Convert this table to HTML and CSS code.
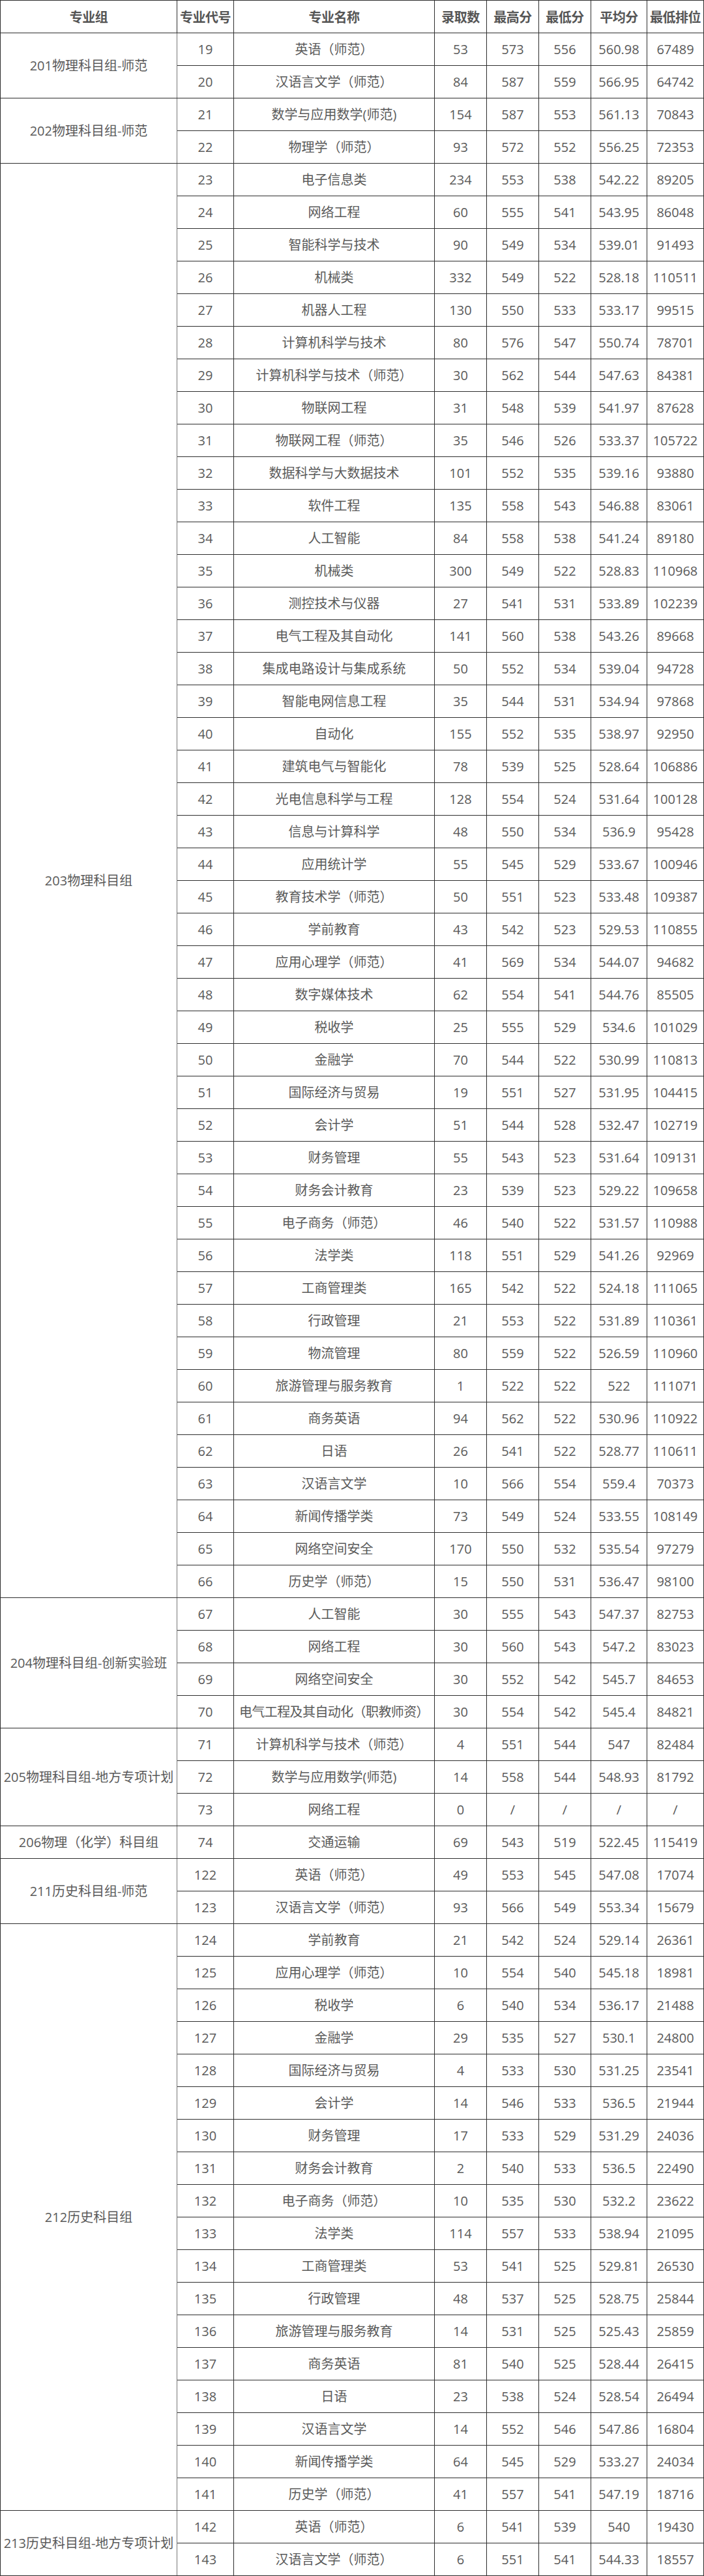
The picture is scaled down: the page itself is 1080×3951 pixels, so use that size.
FILE: index.html
```html
<!DOCTYPE html>
<html lang="zh-CN">
<head>
<meta charset="utf-8">
<title>录取分数</title>
<link rel="stylesheet" href="styles.css">
</head>
<body>
<table class="score-table">
<colgroup>
<col class="c-group"><col class="c-code"><col class="c-name"><col class="c-num"><col class="c-num"><col class="c-num"><col class="c-avg"><col class="c-rank">
</colgroup>
<thead>
<tr><th>专业组</th><th>专业代号</th><th>专业名称</th><th>录取数</th><th>最高分</th><th>最低分</th><th class="gv">平均分</th><th class="gv">最低排位</th></tr>
</thead>
<tbody>
<tr><td rowspan="2" class="grp">201物理科目组-师范</td><td>19</td><td>英语（师范）</td><td>53</td><td>573</td><td>556</td><td class="gv">560.98</td><td class="gv">67489</td></tr>
<tr><td>20</td><td>汉语言文学（师范）</td><td>84</td><td>587</td><td>559</td><td class="gv">566.95</td><td class="gv">64742</td></tr>

<tr><td rowspan="2" class="grp">202物理科目组-师范</td><td>21</td><td>数学与应用数学(师范)</td><td>154</td><td>587</td><td>553</td><td class="gv">561.13</td><td class="gv">70843</td></tr>
<tr><td>22</td><td>物理学（师范）</td><td>93</td><td>572</td><td>552</td><td class="gv">556.25</td><td class="gv">72353</td></tr>

<tr><td rowspan="44" class="grp">203物理科目组</td><td>23</td><td>电子信息类</td><td>234</td><td>553</td><td>538</td><td class="gv">542.22</td><td class="gv">89205</td></tr>
<tr><td>24</td><td>网络工程</td><td>60</td><td>555</td><td>541</td><td class="gv">543.95</td><td class="gv">86048</td></tr>
<tr><td>25</td><td>智能科学与技术</td><td>90</td><td>549</td><td>534</td><td class="gv">539.01</td><td class="gv">91493</td></tr>
<tr><td>26</td><td>机械类</td><td>332</td><td>549</td><td>522</td><td class="gv">528.18</td><td class="gv">110511</td></tr>
<tr><td>27</td><td>机器人工程</td><td>130</td><td>550</td><td>533</td><td class="gv">533.17</td><td class="gv">99515</td></tr>
<tr><td>28</td><td>计算机科学与技术</td><td>80</td><td>576</td><td>547</td><td class="gv">550.74</td><td class="gv">78701</td></tr>
<tr><td>29</td><td>计算机科学与技术（师范）</td><td>30</td><td>562</td><td>544</td><td class="gv">547.63</td><td class="gv">84381</td></tr>
<tr><td>30</td><td>物联网工程</td><td>31</td><td>548</td><td>539</td><td class="gv">541.97</td><td class="gv">87628</td></tr>
<tr><td>31</td><td>物联网工程（师范）</td><td>35</td><td>546</td><td>526</td><td class="gv">533.37</td><td class="gv">105722</td></tr>
<tr><td>32</td><td>数据科学与大数据技术</td><td>101</td><td>552</td><td>535</td><td class="gv">539.16</td><td class="gv">93880</td></tr>
<tr><td>33</td><td>软件工程</td><td>135</td><td>558</td><td>543</td><td class="gv">546.88</td><td class="gv">83061</td></tr>
<tr><td>34</td><td>人工智能</td><td>84</td><td>558</td><td>538</td><td class="gv">541.24</td><td class="gv">89180</td></tr>
<tr><td>35</td><td>机械类</td><td>300</td><td>549</td><td>522</td><td class="gv">528.83</td><td class="gv">110968</td></tr>
<tr><td>36</td><td>测控技术与仪器</td><td>27</td><td>541</td><td>531</td><td class="gv">533.89</td><td class="gv">102239</td></tr>
<tr><td>37</td><td>电气工程及其自动化</td><td>141</td><td>560</td><td>538</td><td class="gv">543.26</td><td class="gv">89668</td></tr>
<tr><td>38</td><td>集成电路设计与集成系统</td><td>50</td><td>552</td><td>534</td><td class="gv">539.04</td><td class="gv">94728</td></tr>
<tr><td>39</td><td>智能电网信息工程</td><td>35</td><td>544</td><td>531</td><td class="gv">534.94</td><td class="gv">97868</td></tr>
<tr><td>40</td><td>自动化</td><td>155</td><td>552</td><td>535</td><td class="gv">538.97</td><td class="gv">92950</td></tr>
<tr><td>41</td><td>建筑电气与智能化</td><td>78</td><td>539</td><td>525</td><td class="gv">528.64</td><td class="gv">106886</td></tr>
<tr><td>42</td><td>光电信息科学与工程</td><td>128</td><td>554</td><td>524</td><td class="gv">531.64</td><td class="gv">100128</td></tr>
<tr><td>43</td><td>信息与计算科学</td><td>48</td><td>550</td><td>534</td><td class="gv">536.9</td><td class="gv">95428</td></tr>
<tr><td>44</td><td>应用统计学</td><td>55</td><td>545</td><td>529</td><td class="gv">533.67</td><td class="gv">100946</td></tr>
<tr><td>45</td><td>教育技术学（师范）</td><td>50</td><td>551</td><td>523</td><td class="gv">533.48</td><td class="gv">109387</td></tr>
<tr><td>46</td><td>学前教育</td><td>43</td><td>542</td><td>523</td><td class="gv">529.53</td><td class="gv">110855</td></tr>
<tr><td>47</td><td>应用心理学（师范）</td><td>41</td><td>569</td><td>534</td><td class="gv">544.07</td><td class="gv">94682</td></tr>
<tr><td>48</td><td>数字媒体技术</td><td>62</td><td>554</td><td>541</td><td class="gv">544.76</td><td class="gv">85505</td></tr>
<tr><td>49</td><td>税收学</td><td>25</td><td>555</td><td>529</td><td class="gv">534.6</td><td class="gv">101029</td></tr>
<tr><td>50</td><td>金融学</td><td>70</td><td>544</td><td>522</td><td class="gv">530.99</td><td class="gv">110813</td></tr>
<tr><td>51</td><td>国际经济与贸易</td><td>19</td><td>551</td><td>527</td><td class="gv">531.95</td><td class="gv">104415</td></tr>
<tr><td>52</td><td>会计学</td><td>51</td><td>544</td><td>528</td><td class="gv">532.47</td><td class="gv">102719</td></tr>
<tr><td>53</td><td>财务管理</td><td>55</td><td>543</td><td>523</td><td class="gv">531.64</td><td class="gv">109131</td></tr>
<tr><td>54</td><td>财务会计教育</td><td>23</td><td>539</td><td>523</td><td class="gv">529.22</td><td class="gv">109658</td></tr>
<tr><td>55</td><td>电子商务（师范）</td><td>46</td><td>540</td><td>522</td><td class="gv">531.57</td><td class="gv">110988</td></tr>
<tr><td>56</td><td>法学类</td><td>118</td><td>551</td><td>529</td><td class="gv">541.26</td><td class="gv">92969</td></tr>
<tr><td>57</td><td>工商管理类</td><td>165</td><td>542</td><td>522</td><td class="gv">524.18</td><td class="gv">111065</td></tr>
<tr><td>58</td><td>行政管理</td><td>21</td><td>553</td><td>522</td><td class="gv">531.89</td><td class="gv">110361</td></tr>
<tr><td>59</td><td>物流管理</td><td>80</td><td>559</td><td>522</td><td class="gv">526.59</td><td class="gv">110960</td></tr>
<tr><td>60</td><td>旅游管理与服务教育</td><td>1</td><td>522</td><td>522</td><td class="gv">522</td><td class="gv">111071</td></tr>
<tr><td>61</td><td>商务英语</td><td>94</td><td>562</td><td>522</td><td class="gv">530.96</td><td class="gv">110922</td></tr>
<tr><td>62</td><td>日语</td><td>26</td><td>541</td><td>522</td><td class="gv">528.77</td><td class="gv">110611</td></tr>
<tr><td>63</td><td>汉语言文学</td><td>10</td><td>566</td><td>554</td><td class="gv">559.4</td><td class="gv">70373</td></tr>
<tr><td>64</td><td>新闻传播学类</td><td>73</td><td>549</td><td>524</td><td class="gv">533.55</td><td class="gv">108149</td></tr>
<tr><td>65</td><td>网络空间安全</td><td>170</td><td>550</td><td>532</td><td class="gv">535.54</td><td class="gv">97279</td></tr>
<tr><td>66</td><td>历史学（师范）</td><td>15</td><td>550</td><td>531</td><td class="gv">536.47</td><td class="gv">98100</td></tr>

<tr><td rowspan="4" class="grp">204物理科目组-创新实验班</td><td>67</td><td>人工智能</td><td>30</td><td>555</td><td>543</td><td class="gv">547.37</td><td class="gv">82753</td></tr>
<tr><td>68</td><td>网络工程</td><td>30</td><td>560</td><td>543</td><td class="gv">547.2</td><td class="gv">83023</td></tr>
<tr><td>69</td><td>网络空间安全</td><td>30</td><td>552</td><td>542</td><td class="gv">545.7</td><td class="gv">84653</td></tr>
<tr><td>70</td><td class="tight">电气工程及其自动化（职教师资）</td><td>30</td><td>554</td><td>542</td><td class="gv">545.4</td><td class="gv">84821</td></tr>

<tr><td rowspan="3" class="grp">205物理科目组-地方专项计划</td><td>71</td><td>计算机科学与技术（师范）</td><td>4</td><td>551</td><td>544</td><td class="gv">547</td><td class="gv">82484</td></tr>
<tr><td>72</td><td>数学与应用数学(师范)</td><td>14</td><td>558</td><td>544</td><td class="gv">548.93</td><td class="gv">81792</td></tr>
<tr><td>73</td><td>网络工程</td><td>0</td><td>/</td><td>/</td><td class="gv">/</td><td class="gv">/</td></tr>

<tr><td class="grp">206物理（化学）科目组</td><td>74</td><td>交通运输</td><td>69</td><td>543</td><td>519</td><td class="gv">522.45</td><td class="gv">115419</td></tr>

<tr><td rowspan="2" class="grp">211历史科目组-师范</td><td>122</td><td>英语（师范）</td><td>49</td><td>553</td><td>545</td><td class="gv">547.08</td><td class="gv">17074</td></tr>
<tr><td>123</td><td>汉语言文学（师范）</td><td>93</td><td>566</td><td>549</td><td class="gv">553.34</td><td class="gv">15679</td></tr>

<tr><td rowspan="18" class="grp">212历史科目组</td><td>124</td><td>学前教育</td><td>21</td><td>542</td><td>524</td><td class="gv">529.14</td><td class="gv">26361</td></tr>
<tr><td>125</td><td>应用心理学（师范）</td><td>10</td><td>554</td><td>540</td><td class="gv">545.18</td><td class="gv">18981</td></tr>
<tr><td>126</td><td>税收学</td><td>6</td><td>540</td><td>534</td><td class="gv">536.17</td><td class="gv">21488</td></tr>
<tr><td>127</td><td>金融学</td><td>29</td><td>535</td><td>527</td><td class="gv">530.1</td><td class="gv">24800</td></tr>
<tr><td>128</td><td>国际经济与贸易</td><td>4</td><td>533</td><td>530</td><td class="gv">531.25</td><td class="gv">23541</td></tr>
<tr><td>129</td><td>会计学</td><td>14</td><td>546</td><td>533</td><td class="gv">536.5</td><td class="gv">21944</td></tr>
<tr><td>130</td><td>财务管理</td><td>17</td><td>533</td><td>529</td><td class="gv">531.29</td><td class="gv">24036</td></tr>
<tr><td>131</td><td>财务会计教育</td><td>2</td><td>540</td><td>533</td><td class="gv">536.5</td><td class="gv">22490</td></tr>
<tr><td>132</td><td>电子商务（师范）</td><td>10</td><td>535</td><td>530</td><td class="gv">532.2</td><td class="gv">23622</td></tr>
<tr><td>133</td><td>法学类</td><td>114</td><td>557</td><td>533</td><td class="gv">538.94</td><td class="gv">21095</td></tr>
<tr><td>134</td><td>工商管理类</td><td>53</td><td>541</td><td>525</td><td class="gv">529.81</td><td class="gv">26530</td></tr>
<tr><td>135</td><td>行政管理</td><td>48</td><td>537</td><td>525</td><td class="gv">528.75</td><td class="gv">25844</td></tr>
<tr><td>136</td><td>旅游管理与服务教育</td><td>14</td><td>531</td><td>525</td><td class="gv">525.43</td><td class="gv">25859</td></tr>
<tr><td>137</td><td>商务英语</td><td>81</td><td>540</td><td>525</td><td class="gv">528.44</td><td class="gv">26415</td></tr>
<tr><td>138</td><td>日语</td><td>23</td><td>538</td><td>524</td><td class="gv">528.54</td><td class="gv">26494</td></tr>
<tr><td>139</td><td>汉语言文学</td><td>14</td><td>552</td><td>546</td><td class="gv">547.86</td><td class="gv">16804</td></tr>
<tr><td>140</td><td>新闻传播学类</td><td>64</td><td>545</td><td>529</td><td class="gv">533.27</td><td class="gv">24034</td></tr>
<tr><td>141</td><td>历史学（师范）</td><td>41</td><td>557</td><td>541</td><td class="gv">547.19</td><td class="gv">18716</td></tr>

<tr><td rowspan="2" class="grp">213历史科目组-地方专项计划</td><td>142</td><td>英语（师范）</td><td>6</td><td>541</td><td>539</td><td class="gv">540</td><td class="gv">19430</td></tr>
<tr><td>143</td><td>汉语言文学（师范）</td><td>6</td><td>551</td><td>541</td><td class="gv">544.33</td><td class="gv">18557</td></tr>
</tbody>
</table>
</body>
</html>
```

FILE: styles.css
```css
html, body {
  margin: 0;
  padding: 0;
  background: #ffffff;
}

.score-table {
  border-collapse: collapse;
  table-layout: fixed;
  width: 1079px;
  font-family: "Open Sans", "Noto Sans CJK SC", sans-serif;
  font-size: 20px;
  color: #5a5a5a;
}

.c-group { width: 271px; }
.c-code { width: 87px; }
.c-name { width: 308px; }
.c-num { width: 80px; }
.c-avg { width: 86px; }
.c-rank { width: 87px; }

.score-table tr {
  height: 50px;
}

.score-table th,
.score-table td {
  border: 1px solid #2e2e2e;
  padding: 0;
  height: 49px;
  text-align: center;
  vertical-align: middle;
  white-space: nowrap;
  overflow: hidden;
  line-height: 1.2;
}

.score-table th {
  font-family: "Noto Sans CJK SC", sans-serif;
  font-weight: 700;
  color: #555555;
  letter-spacing: -0.5px;
}

.score-table .gv {
  border-left-color: #7a7a7a;
}

.score-table .grp {
  border-right-color: #777777;
}

.score-table .tight {
  letter-spacing: -0.6px;
}
```
